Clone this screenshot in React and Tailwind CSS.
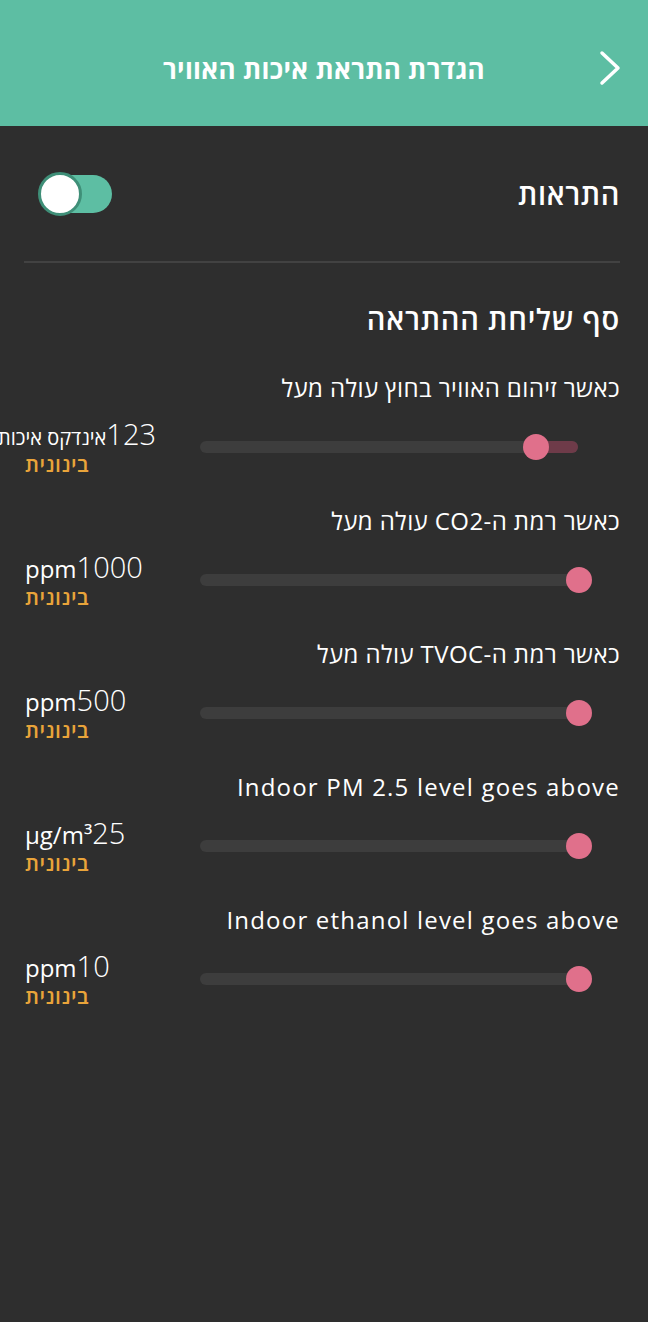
import React from 'react'

const FONT = "font-['Open_Sans','Noto_Sans','DejaVu_Sans',sans-serif]"

const ITEMS = [
  { label: 'כאשר זיהום האוויר בחוץ עולה מעל', value: '123', unit: 'אינדקס איכות', pos: 0.887, fill: true, heUnit: true },
  { label: 'כאשר רמת ה-CO2 עולה מעל', value: '1000', unit: 'ppm', pos: 1 },
  { label: 'כאשר רמת ה-TVOC עולה מעל', value: '500', unit: 'ppm', pos: 1 },
  { label: 'Indoor PM 2.5 level goes above', value: '25', unit: 'µg/m³', pos: 1, latin: true },
  { label: 'Indoor ethanol level goes above', value: '10', unit: 'ppm', pos: 1, latin: true },
]

const Slider = ({ pos, fill }) => {
  // track is 378px wide, thumb centre runs along it
  const x = Math.round(pos * 379)
  return (
    <div className="relative w-[392px] h-[26px]">
      <div className="absolute left-0 top-[7px] w-[378px] h-[12px] rounded-full bg-[#3d3d3d]" />
      {fill && (
        <div
          className="absolute top-[7px] h-[12px] rounded-r-full bg-[#6e3b49]"
          style={{ left: x, width: 378 - x }}
        />
      )}
      <div
        className="absolute top-0 w-[26px] h-[26px] rounded-full bg-[#e0708b]"
        style={{ left: x - 13 }}
      />
    </div>
  )
}

const Threshold = ({ item }) => (
  <div className="flex flex-col">
    <p
      dir="rtl"
      className={`text-right text-[24px] leading-[28px] text-white pr-[28px] whitespace-nowrap ${
        item.latin ? 'tracking-[1.2px]' : 'tracking-[0.4px]'
      }`}
    >
      {item.label}
    </p>
    <div className="flex items-center mt-[18px] h-[54px]">
      <div dir="rtl" className="ml-[25px] w-[131px] text-left whitespace-nowrap flex-none">
        <div className="leading-[28px] text-white">
          <bdi className="text-[29px] font-light">{item.value}</bdi>
          <bdi className={item.heUnit ? 'text-[20px]' : 'text-[24px]'}>{item.unit}</bdi>
        </div>
        <div className="text-[21px] leading-[22px] font-semibold tracking-[0.5px] text-[#e9a43a]">בינונית</div>
      </div>
      <div className="ml-[44px]">
        <Slider pos={item.pos} fill={item.fill} />
      </div>
    </div>
  </div>
)

export default function App() {
  return (
    <div className={`w-[648px] min-h-[1322px] bg-[#2e2e2e] overflow-hidden ${FONT}`}>
      <header className="relative h-[126px] pt-[12px] bg-[#5dbea3] flex items-center justify-center">
        <h1 dir="rtl" className="text-[26px] font-bold tracking-[0.3px] text-white">הגדרת התראת איכות האוויר</h1>
        <svg className="absolute right-[26px] top-[50px]" width="24" height="36" viewBox="0 0 24 36" fill="none">
          <path d="M4 3 L20 18 L4 33" stroke="white" strokeWidth="3.5" strokeLinecap="round" strokeLinejoin="round" />
        </svg>
      </header>

      <div className="flex items-center justify-between mt-[46px] h-[44px] pl-[38px] pr-[28px]">
        <div className="relative w-[74px] h-[44px]">
          <div className="absolute left-[4px] right-0 top-[3px] bottom-[3px] rounded-full bg-[#5dbea3]" />
          <div className="absolute left-0 top-0 w-[44px] h-[44px] rounded-full bg-white border-[3px] border-[#3f8f78]" />
        </div>
        <span dir="rtl" className="text-[29px] leading-[36px] font-semibold tracking-[0.6px] text-white">התראות</span>
      </div>

      <div className="ml-[24px] mr-[28px] mt-[45px] h-[2px] bg-[#424242]" />

      <h2 dir="rtl" className="mt-[40px] pr-[28px] text-right text-[29px] leading-[32px] font-semibold tracking-[0.8px] text-white">
        סף שליחת ההתראה
      </h2>

      <div className="flex flex-col gap-[33px] mt-[39px]">
        {ITEMS.map((it) => (
          <Threshold key={it.label} item={it} />
        ))}
      </div>
    </div>
  )
}
